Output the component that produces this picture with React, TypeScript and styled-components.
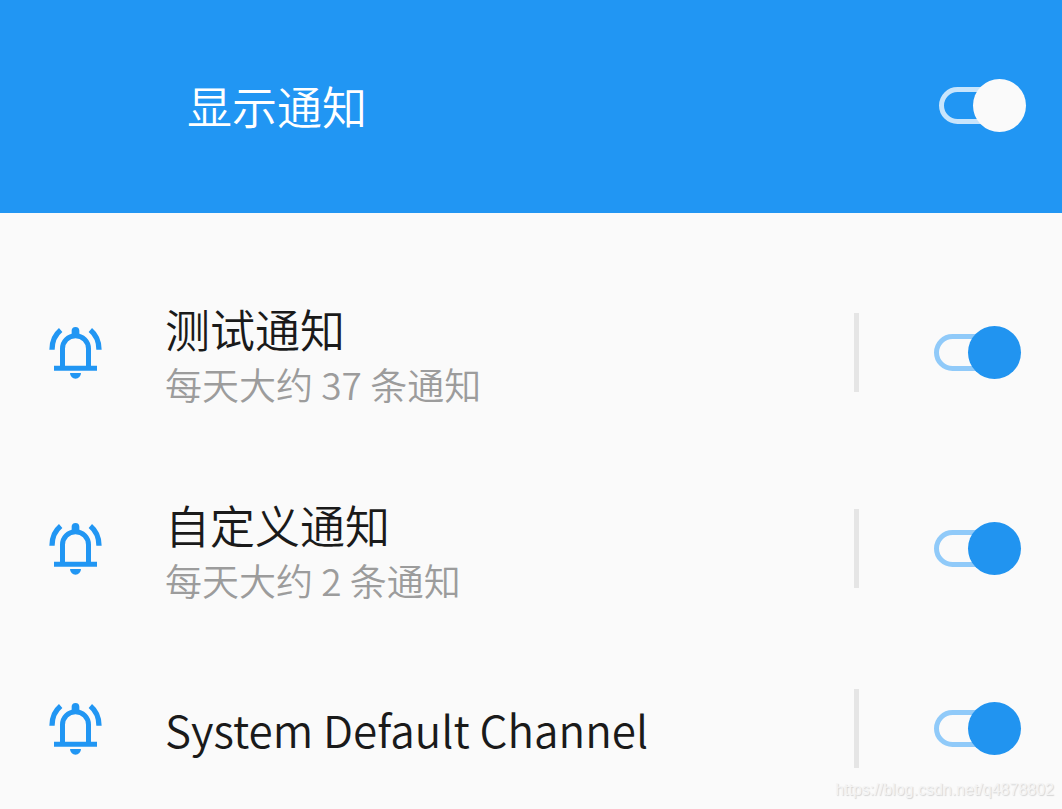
import React, { useState } from "react";
import styled, { createGlobalStyle } from "styled-components";

const GlobalStyle = createGlobalStyle`
  body {
    margin: 0;
    background: #fafafa;
    font-family: "Noto Sans CJK SC", "Noto Sans", sans-serif;
    font-weight: 350;
    color: #1a1a1a;
  }
`;

const Page = styled.main`
  position: relative;
`;

const Header = styled.header`
  display: flex;
  align-items: center;
  justify-content: space-between;
  padding: 79px 36px 81px 187px;
  background: #2196f3;
  color: #ffffff;
`;

const HeaderTitle = styled.label`
  font-size: 45px;
  line-height: 50px;
`;

const List = styled.ul`
  display: flex;
  flex-direction: column;
  gap: 81px;
  margin: 0;
  padding: 82px 41px 40px 49px;
  list-style: none;
`;

const Row = styled.li`
  display: flex;
  align-items: center;

  &:last-child {
    padding-top: 2px;
  }
`;

const Bell = styled.svg`
  flex: none;
  width: 53px;
  height: 52px;
  margin-right: 63px;
`;

const Texts = styled.label<{ $twoLine: boolean }>`
  flex: 1;
  min-width: 0;
  padding-top: ${(p) => (p.$twoLine ? "4px" : "0")};
`;

const Title = styled.span<{ $latin: boolean }>`
  display: block;
  font-size: ${(p) => (p.$latin ? "44px" : "45px")};
  line-height: ${(p) => (p.$latin ? "58px" : "59px")};
`;

const Summary = styled.span`
  display: block;
  font-size: 37px;
  line-height: 52px;
  color: #9c9c9c;
`;

const Divider = styled.span`
  flex: none;
  width: 5px;
  height: 79px;
  margin-right: 75px;
  background: #e5e5e5;
`;

const Switch = styled.input<{ $track: string; $thumb: string }>`
  appearance: none;
  flex: none;
  display: grid;
  align-items: center;
  width: 87px;
  height: 53px;
  margin: 0;
  cursor: pointer;

  &::before,
  &::after {
    content: "";
    grid-area: 1 / 1;
    box-sizing: border-box;
  }

  &::before {
    width: 70px;
    height: 37px;
    border: 5px solid ${(p) => p.$track};
    border-radius: 19px;
  }

  &::after {
    justify-self: start;
    width: 53px;
    height: 53px;
    border-radius: 50%;
    background: ${(p) => p.$thumb};
  }

  &:checked::after {
    justify-self: end;
  }
`;

const Watermark = styled.footer`
  position: absolute;
  right: 8px;
  bottom: 8px;
  font-family: "Liberation Sans", Arial, sans-serif;
  font-size: 16px;
  font-weight: 400;
  line-height: 20px;
  color: #f4f4f4;
  text-shadow: 1px 1px 1px #d4d4d4;
`;

const BellIcon = () => (
  <Bell viewBox="57 52 159 156" fill="none" stroke="#2196f3" strokeWidth="15" aria-hidden="true">
    <path d="M97.500 170V117a39 39 0 0 1 78 0V170" />
    <path d="M72 175.500H201" />
    <path d="M66 120C66 96 75 75 92 61" strokeWidth="16" />
    <path d="M207 120C207 96 198 75 181 61" strokeWidth="16" />
    <path d="M125 76V63.500a11.500 11.500 0 0 1 23 0V76z" fill="#2196f3" stroke="none" />
    <path d="M120 190H153a16.500 17 0 0 1-33 0z" fill="#2196f3" stroke="none" />
  </Bell>
);

const channels = [
  { id: "test", title: "测试通知", summary: "每天大约 37 条通知", latin: false },
  { id: "custom", title: "自定义通知", summary: "每天大约 2 条通知", latin: false },
  { id: "system", title: "System Default Channel", summary: "", latin: true },
];

export default function App() {
  const [enabled, setEnabled] = useState<Record<string, boolean>>({
    all: true,
    test: true,
    custom: true,
    system: true,
  });
  const toggle = (id: string) => setEnabled((s) => ({ ...s, [id]: !s[id] }));

  return (
    <Page lang="zh-CN">
      <GlobalStyle />
      <Header>
        <HeaderTitle htmlFor="all">显示通知</HeaderTitle>
        <Switch
          type="checkbox"
          id="all"
          checked={enabled.all}
          onChange={() => toggle("all")}
          $track="#c8e5fc"
          $thumb="#fafafa"
        />
      </Header>
      <List>
        {channels.map((c) => (
          <Row key={c.id}>
            <BellIcon />
            <Texts htmlFor={c.id} $twoLine={c.summary !== ""}>
              <Title $latin={c.latin}>{c.title}</Title>
              {c.summary && <Summary>{c.summary}</Summary>}
            </Texts>
            <Divider />
            <Switch
              type="checkbox"
              id={c.id}
              checked={enabled[c.id]}
              onChange={() => toggle(c.id)}
              $track="#90caf9"
              $thumb="#2194f0"
            />
          </Row>
        ))}
      </List>
      <Watermark>https://blog.csdn.net/q4878802</Watermark>
    </Page>
  );
}
